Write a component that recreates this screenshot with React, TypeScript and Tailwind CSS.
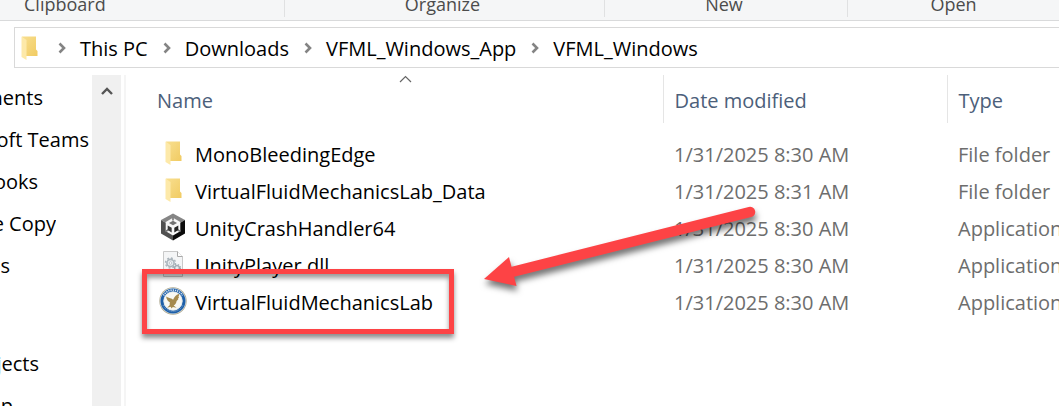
import React, { useState } from 'react'

type FileKind = 'folder' | 'unity' | 'dll' | 'lab'

interface FileRow {
  name: string
  date: string
  type: string
  kind: FileKind
}

const files: FileRow[] = [
  { name: 'MonoBleedingEdge', date: '1/31/2025 8:30 AM', type: 'File folder', kind: 'folder' },
  { name: 'VirtualFluidMechanicsLab_Data', date: '1/31/2025 8:31 AM', type: 'File folder', kind: 'folder' },
  { name: 'UnityCrashHandler64', date: '1/31/2025 8:30 AM', type: 'Application', kind: 'unity' },
  { name: 'UnityPlayer.dll', date: '1/31/2025 8:30 AM', type: 'Application', kind: 'dll' },
  { name: 'VirtualFluidMechanicsLab', date: '1/31/2025 8:30 AM', type: 'Application', kind: 'lab' },
]

const crumbs = ['This PC', 'Downloads', 'VFML_Windows_App', 'VFML_Windows']

// the tree is scrolled sideways, visible is how much of each label is left
const quickAccess = [
  { label: 'ments', visible: 43 },
  { label: 'oft Teams', visible: 89 },
  { label: 'ooks', visible: 38 },
  { label: 'e Copy', visible: 56 },
  { label: 'es', visible: 10 },
]

const thisPc = [
  { label: 'jects', visible: 39 },
  { label: 'op', visible: 13 },
]

const FolderIcon = () => (
  <svg width="17" height="24" viewBox="0 0 17 24" aria-hidden="true">
    <defs>
      <linearGradient id="folderBack" x1="0" y1="0" x2="1" y2="1">
        <stop offset="0" stopColor="#f8df90" />
        <stop offset="1" stopColor="#f1cb62" />
      </linearGradient>
    </defs>
    <path d="M1 0.5h14v13l1.5 1.5v5H3z" fill="url(#folderBack)" />
    <path d="M0.5 0.5l5 3.5v20l-5-3z" fill="#fde9a9" />
  </svg>
)

const UnityIcon = () => (
  <svg width="26" height="28" viewBox="0 0 26 28" aria-hidden="true">
    <path d="M13 0.500l12 6.500-12 7-12-7z" fill="#858585" />
    <path d="M1 7l12 7v13.500L1 20.500z" fill="#505050" />
    <path d="M25 7l-12 7v13.500l12-7z" fill="#0b0b0b" />
    <path d="M13 4.800l7.300 4.200v9.200L13 22.400l-7.300-4.200V9z" fill="#f6f6f6" />
    <path d="M13 4.500v3M5.500 18.500l3-1.800M20.500 18.500l-3-1.800" stroke="#777" strokeWidth="1.600" />
    <path d="M9 10l4-2.300 4 2.300-4 2.300z" fill="#707070" />
    <path d="M7.700 12.500l4 2.300v4.600l-4-2.300z" fill="#3c3c3c" />
    <path d="M18.300 12.500l-4 2.300v4.600l4-2.300z" fill="#222" />
  </svg>
)

const DllIcon = () => (
  <svg width="20" height="26" viewBox="0 0 20 26" aria-hidden="true">
    <path d="M0.500 0.500h14l5 5v20h-19z" fill="#f4f5f6" stroke="#c9c9c9" />
    <path d="M14.500 0.500v5h5" fill="#fff" stroke="#a9a9a9" />
    <circle cx="7.500" cy="12" r="3.600" fill="#e9edf0" stroke="#aab4bb" strokeWidth="1.600" />
    <circle cx="7.500" cy="12" r="5" fill="none" stroke="#aab4bb" strokeWidth="1.400" strokeDasharray="1.900 2" />
    <circle cx="7.500" cy="12" r="1.300" fill="#fff" stroke="#aab4bb" strokeWidth="0.700" />
    <circle cx="14" cy="17" r="2.400" fill="#e9edf0" stroke="#9faab2" strokeWidth="1.400" />
    <circle cx="14" cy="17" r="3.500" fill="none" stroke="#9faab2" strokeWidth="1.200" strokeDasharray="1.400 1.400" />
  </svg>
)

const LabIcon = () => (
  <svg width="28" height="28" viewBox="0 0 28 28" aria-hidden="true">
    <circle cx="14" cy="14" r="13.700" fill="#b0ab93" />
    <circle cx="14" cy="14" r="12.900" fill="#dfe9f2" />
    <circle cx="14" cy="14" r="11" fill="none" stroke="#1e5fa8" strokeWidth="3" />
    <path d="M4.500 8.500a11 11 0 0 1 19 0" fill="none" stroke="#d5e3f0" strokeWidth="1.600" strokeDasharray="1.300 0.900" />
    <path d="M4 18a11 11 0 0 0 20 0" fill="none" stroke="#88add3" strokeWidth="1" strokeDasharray="1 1" />
    <circle cx="14" cy="14" r="9.300" fill="#f8f8f3" stroke="#cbd7e0" strokeWidth="0.500" />
    <path d="M7.200 9.500c1.800 1 3.400 1.700 5.600 2.300l1.300 0.900c1-2.600 2.600-4.800 6.200-6-0.200 1.500-0.500 2.500-0.900 3.300l0.700 0.100-1.200 1.800 0.500 0.300-1.800 1.700c-0.300 2.200-1.300 3.600-3 4.500l3 2.300-3.800-0.600-1.200 1.400-1-1.700-3.500 0.900 2.700-2.700c-0.300-1.300-0.100-2 0.200-2.600-2-1.100-3.600-2.900-3.800-5.600z" fill="#a58a4e" />
  </svg>
)

const icons: Record<FileKind, React.ReactNode> = {
  folder: <FolderIcon />,
  unity: <UnityIcon />,
  dll: <DllIcon />,
  lab: <LabIcon />,
}

const Ribbon = () => (
  <div className="flex h-[21px] overflow-hidden border-b border-[#d9dadb] bg-[#f5f6f7] text-lg leading-[26px] text-[#4c4c4c]">
    <div className="flex h-[17px] w-[285px] items-end border-r border-[#e0e1e2] pl-6">Clipboard</div>
    <div className="flex h-[17px] w-80 items-end justify-center border-r border-[#e0e1e2] pr-1">Organize</div>
    <div className="flex h-[17px] w-[243px] items-end justify-center border-r border-[#e0e1e2] pr-1">New</div>
    <div className="flex h-[17px] flex-1 items-end justify-center">Open</div>
  </div>
)

const AddressBar = () => (
  <nav aria-label="Path" className="mt-[6px] ml-[14px] flex h-[41px] items-center overflow-hidden border-y border-l border-[#d9d9d9] pl-[6px]">
    <FolderIcon />
    <ol className="ml-5 flex items-center">
      {crumbs.map((crumb) => (
        <li key={crumb} className="flex items-center">
          <svg width="8" height="12" viewBox="0 0 8 12" aria-hidden="true">
            <path d="M1.500 1.500L6 6l-4.500 4.500" fill="none" stroke="#848484" strokeWidth="2.600" />
          </svg>
          <button className="mr-[15px] ml-[14px] pt-[2px] whitespace-nowrap">{crumb}</button>
        </li>
      ))}
    </ol>
  </nav>
)

const TreeList = ({ items }: { items: { label: string; visible: number }[] }) => (
  <ul>
    {items.map((item) => (
      <li key={item.label} className="flex h-[42px] items-center">
        <button className="flex justify-end overflow-hidden whitespace-nowrap" style={{ width: item.visible }}>
          {item.label}
        </button>
      </li>
    ))}
  </ul>
)

const Sidebar = () => (
  <aside className="flex w-[126px] shrink-0 border-r-2 border-[#f5f5f5]">
    <div className="flex w-[92px] flex-col gap-14 overflow-hidden pt-[2px]">
      <TreeList items={quickAccess} />
      <TreeList items={thisPc} />
    </div>
    <div className="w-[29px] bg-[#f0f0f0]">
      <button aria-label="Scroll up" className="flex h-8 w-full items-center justify-center">
        <svg width="12" height="10" viewBox="0 0 12 10" aria-hidden="true">
          <path d="M1 8l5-5 5 5" fill="none" stroke="#555" strokeWidth="2.400" />
        </svg>
      </button>
    </div>
  </aside>
)

const FileTable = () => {

  const [selected, setSelected] = useState<string>("")

  return (
    <table className="w-full table-fixed border-collapse text-left whitespace-nowrap">
      <colgroup>
        <col />
        <col className="w-[284px]" />
        <col className="w-28" />
      </colgroup>
      <thead>
        <tr className="h-12 text-[#4c607a]">
          <th className="relative border-r border-[#e5e5e5] p-0 pt-1 pl-[31px] font-normal">
            <svg className="absolute top-0 left-1/2 ml-[5px]" width="13" height="8" viewBox="0 0 13 8" aria-hidden="true">
              <path d="M1 7l5.500-5.500L12 7" fill="none" stroke="#666" strokeWidth="1.200" />
            </svg>
            <button>Name</button>
          </th>
          <th className="border-r border-[#e5e5e5] p-0 pt-1 pl-[11px] font-normal"><button>Date modified</button></th>
          <th className="p-0 pt-1 pl-[11px] font-normal"><button>Type</button></th>
        </tr>
      </thead>
      <tbody>
        <tr className="h-[13px]" aria-hidden="true" />
        {files.map((file) => (
          <tr key={file.name} className="h-[37px] text-[#6d6d6d]" onClick={() => setSelected(file.name)} aria-selected={selected === file.name}>
            <td className="p-0 pl-[31px]">
              <div className="flex h-7 items-center gap-[6px] text-black">
                <span className="flex w-8 justify-center pb-1">{icons[file.kind]}</span>
                <span>{file.name}</span>
              </div>
            </td>
            <td className="p-0 pl-[11px]">{file.date}</td>
            <td className="overflow-hidden p-0 pl-[11px]">{file.type}</td>
          </tr>
        ))}
      </tbody>
    </table>
  )
}

const Callout = () => (
  <>
    <div className="pointer-events-none absolute top-[194px] left-4 h-[65px] w-[312px] border-5 border-[#fd4345] shadow-[0_4px_5px_rgba(0,0,0,0.45),inset_0_4px_5px_rgba(0,0,0,0.4)]" />
    <svg className="pointer-events-none absolute top-[125px] left-[350px] drop-shadow-[1px_5px_3px_rgba(0,0,0,0.55)]" width="290" height="100" viewBox="476 200 290 100" aria-hidden="true">
      <path d="M750 212L512 272" stroke="#fd4345" strokeWidth="10.500" strokeLinecap="round" />
      <path d="M484 279l25-22 7.500 29z" fill="#fd4345" />
    </svg>
  </>
)

const App = () => {
  return (
    <div className="flex h-screen flex-col overflow-hidden bg-white font-['Open_Sans','Noto_Sans',sans-serif] text-xl leading-7 text-black">
      <Ribbon />
      <AddressBar />
      <div className="mt-[7px] flex min-h-0 flex-1">
        <Sidebar />
        <main className="relative min-w-0 flex-1">
          <FileTable />
          <Callout />
        </main>
      </div>
    </div>
  )
}

export default App
